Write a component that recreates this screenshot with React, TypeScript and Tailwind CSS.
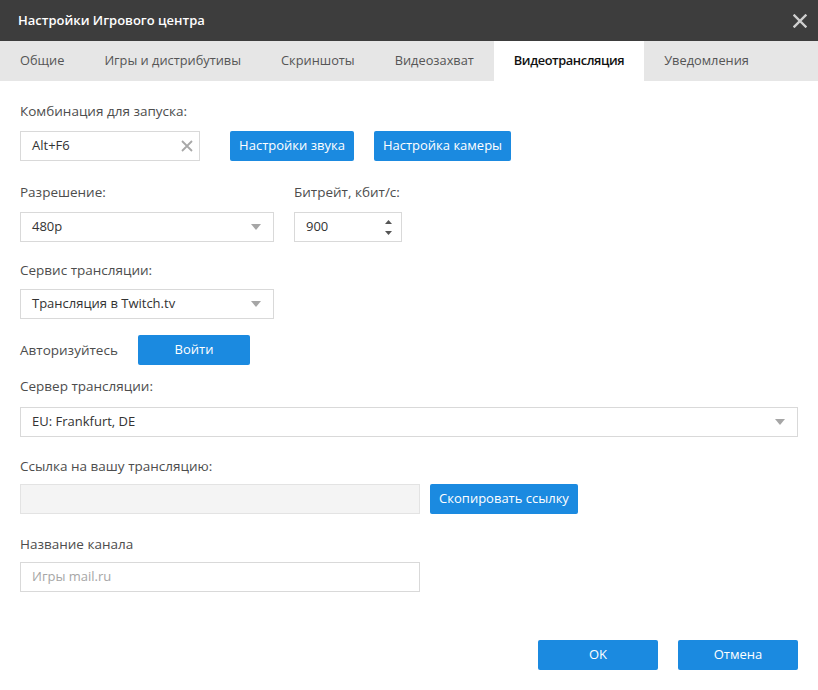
import React from "react";

const font = { fontFamily: '"Open Sans", "Noto Sans", sans-serif' };

function Caret() {
  return (
    <svg width="10" height="6" viewBox="0 0 10 6" className="shrink-0">
      <path d="M0 0 L10 0 L5 6 Z" fill="#a6a6a6" />
    </svg>
  );
}

function Label({ children, className = "" }: { children: React.ReactNode; className?: string }) {
  return (
    <div className={`h-[20px] leading-[20px] text-[13.5px] text-[#4d4d4d] whitespace-nowrap ${className}`}>{children}</div>
  );
}

function Select({ value, className = "" }: { value: string; className?: string }) {
  return (
    <div
      className={`h-[30px] border border-[#d9d9d9] bg-white flex items-center justify-between pl-[11px] pr-[12px] text-[13px] text-[#333] ${className}`}
    >
      <span className="whitespace-nowrap">{value}</span>
      <Caret />
    </div>
  );
}

function Btn({ children, className = "" }: { children: React.ReactNode; className?: string }) {
  return (
    <div
      className={`h-[30px] rounded-[2px] bg-[#1b8ae0] text-white text-[13px] whitespace-nowrap flex items-center justify-center ${className}`}
    >
      {children}
    </div>
  );
}

export default function App() {
  const tabs = ["Общие", "Игры и дистрибутивы", "Скриншоты", "Видеозахват", "Видеотрансляция", "Уведомления"];
  return (
    <div style={font} className="w-[818px] h-[690px] bg-white flex flex-col overflow-hidden">
      <div className="h-[41px] bg-[#3d3d3d] flex items-center justify-between pl-[18px] pr-[11px]">
        <span className="text-white font-semibold text-[13px]">Настройки Игрового центра</span>
        <svg width="14" height="14" viewBox="0 0 14 14">
          <path d="M1.5 1.5 L12.5 12.5 M12.5 1.5 L1.5 12.5" stroke="#cfcfcf" strokeWidth="2.4" strokeLinecap="square" />
        </svg>
      </div>
      <div className="h-[40px] bg-[#e6e6e6] flex">
        {tabs.map((t) => {
          const active = t === "Видеотрансляция";
          return (
            <div
              key={t}
              className={`px-[20px] flex items-center text-[12.8px] whitespace-nowrap ${
                active ? "bg-white font-semibold text-[#111] tracking-[-0.4px]" : "text-[#555]"
              }`}
            >
              {t}
            </div>
          );
        })}
      </div>

      <div className="flex-1 flex flex-col px-[20px] pt-[20px]">
        <Label>Комбинация для запуска:</Label>
        <div className="mt-[10px] flex gap-[30px] items-center">
          <div className="w-[180px] h-[30px] border border-[#d9d9d9] flex items-center justify-between pl-[11px] pr-[6px] text-[13px] text-[#333]">
            <span>Alt+F6</span>
            <svg width="12" height="12" viewBox="0 0 12 12">
              <path d="M1 1 L11 11 M11 1 L1 11" stroke="#a8a8a8" strokeWidth="1.8" />
            </svg>
          </div>
          <div className="flex gap-[20px]">
            <Btn className="w-[124px]">Настройки звука</Btn>
            <Btn className="w-[137px]">Настройка камеры</Btn>
          </div>
        </div>

        <div className="mt-[21px] flex gap-[20px]">
          <div className="flex flex-col w-[254px]">
            <Label>Разрешение:</Label>
            <Select className="mt-[10px]" value="480p" />
          </div>
          <div className="flex flex-col w-[108px]">
            <Label>Битрейт, кбит/с:</Label>
            <div className="mt-[10px] h-[30px] border border-[#d9d9d9] flex items-center justify-between pl-[11px] pr-[9px] text-[13px] text-[#333]">
              <span>900</span>
              <div className="flex flex-col gap-[7px]">
                <svg width="7" height="4" viewBox="0 0 7 4">
                  <path d="M0 4 L7 4 L3.5 0 Z" fill="#555" />
                </svg>
                <svg width="7" height="4" viewBox="0 0 7 4">
                  <path d="M0 0 L7 0 L3.5 4 Z" fill="#555" />
                </svg>
              </div>
            </div>
          </div>
        </div>

        <Label className="mt-[18px]">Сервис трансляции:</Label>
        <Select className="mt-[9px] w-[254px]" value="Трансляция в Twitch.tv" />

        <div className="mt-[16px] flex items-center gap-[20px]">
          <span className="text-[13.5px] text-[#4d4d4d] w-[98px] whitespace-nowrap">Авторизуйтесь</span>
          <Btn className="w-[112px]">Войти</Btn>
        </div>

        <Label className="mt-[11px]">Сервер трансляции:</Label>
        <Select className="mt-[11px] w-[778px]" value="EU: Frankfurt, DE" />

        <Label className="mt-[19px]">Ссылка на вашу трансляцию:</Label>
        <div className="mt-[8px] flex gap-[10px]">
          <div className="w-[400px] h-[30px] border border-[#e3e3e3] bg-[#f4f4f4]" />
          <Btn className="w-[148px]">Скопировать ссылку</Btn>
        </div>

        <Label className="mt-[20px]">Название канала</Label>
        <div className="mt-[8px] w-[400px] h-[30px] border border-[#d9d9d9] flex items-center pl-[11px] text-[13px] text-[#a6a6a6]">
          Игры mail.ru
        </div>

        <div className="mt-auto mb-[20px] flex justify-end gap-[20px]">
          <Btn className="w-[120px]">OK</Btn>
          <Btn className="w-[120px]">Отмена</Btn>
        </div>
      </div>
    </div>
  );
}
